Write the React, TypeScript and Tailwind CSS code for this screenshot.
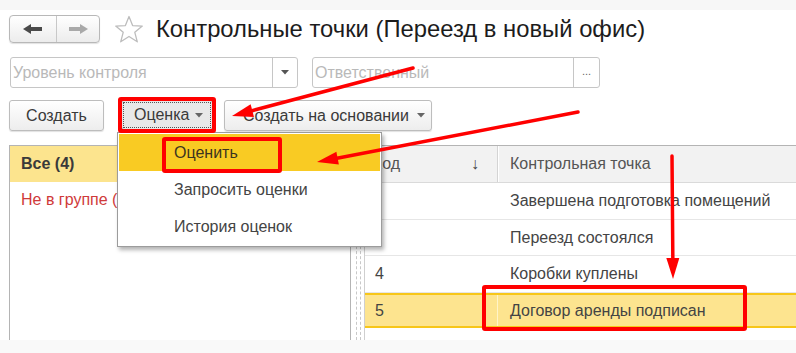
import React from "react";

function arrowParts(x1: number, y1: number, x2: number, y2: number, L = 21, W = 6.5) {
  const dx = x2 - x1;
  const dy = y2 - y1;
  const len = Math.hypot(dx, dy);
  const ux = dx / len;
  const uy = dy / len;
  const bx = x2 - ux * L;
  const by = y2 - uy * L;
  const px = -uy;
  const py = ux;
  const pts = `${x2},${y2} ${bx + px * W},${by + py * W} ${bx - px * W},${by - py * W}`;
  return { line: { x1, y1, x2: bx + ux * 2, y2: by + uy * 2 }, pts };
}

function Arrow({ x1, y1, x2, y2 }: { x1: number; y1: number; x2: number; y2: number }) {
  const a = arrowParts(x1, y1, x2, y2);
  return (
    <g>
      <line {...a.line} stroke="#ff0000" strokeWidth={3.5} strokeLinecap="round" />
      <polygon points={a.pts} fill="#ff0000" />
    </g>
  );
}

function Caret({ color = "#555" }: { color?: string }) {
  return (
    <svg width="8" height="5" viewBox="0 0 8 5" className="shrink-0">
      <path d="M0 0 L8 0 L4 4.5 Z" fill={color} />
    </svg>
  );
}

const btn =
  "h-[31px] flex items-center rounded-[3px] border border-[#bdbdbd] bg-gradient-to-b from-white to-[#ededed] shadow-[0_1px_1px_rgba(0,0,0,0.12)] text-[16px] text-[#3a3a3a]";

export default function App() {
  return (
    <div className="relative w-[796px] h-[353px] overflow-hidden bg-white flex flex-col font-['Liberation_Sans',Arial,sans-serif]">
      <div className="h-[10px] bg-[#f7f7f7] shrink-0" />

      {/* Row 1 */}
      <div className="mt-[5px] h-[28px] flex items-center shrink-0">
        <div className="ml-[9px] w-[91px] h-[28px] flex rounded-[4px] border border-[#b8b8b8] bg-gradient-to-b from-white to-[#ececec] shadow-[0_1px_1px_rgba(0,0,0,0.12)]">
          <div className="w-[47px] h-full flex items-center justify-center border-r border-[#c8c8c8]">
            <svg width="20" height="10" viewBox="0 0 20 10">
              <path d="M0 5 L8 0 L8 10 Z" fill="#4a4a4a" />
              <rect x="7" y="3" width="12" height="4" fill="#4a4a4a" />
            </svg>
          </div>
          <div className="flex-1 h-full flex items-center justify-center">
            <svg width="20" height="10" viewBox="0 0 20 10">
              <path d="M20 5 L12 0 L12 10 Z" fill="#a9a9a9" />
              <rect x="1" y="3" width="12" height="4" fill="#a9a9a9" />
            </svg>
          </div>
        </div>
        <svg width="30" height="28" viewBox="0 0 30 28" className="ml-[14px]">
          <path
            d="M15 1.5 L18.6 10.6 L28.3 11.1 L20.8 17.3 L23.3 26.8 L15 21.5 L6.7 26.8 L9.2 17.3 L1.7 11.1 L11.4 10.6 Z"
            fill="none"
            stroke="#bdbdbd"
            strokeWidth="1.3"
            strokeLinejoin="round"
          />
        </svg>
        <div className="ml-[12px] text-[23.8px] leading-[28px] text-[#1c1c1c] whitespace-nowrap">
          Контрольные точки (Переезд в новый офис)
        </div>
      </div>

      {/* Row 2 */}
      <div className="mt-[14px] h-[31px] flex shrink-0">
        <div className="ml-[10px] w-[288px] h-full flex rounded-[3px] border border-[#c6c6c6] bg-white">
          <div className="flex-1 flex items-center pl-[2px] text-[16px] text-[#b9b9b9] whitespace-nowrap">
            Уровень контроля
          </div>
          <div className="w-[25px] border-l border-[#c6c6c6] flex items-center justify-center">
            <Caret color="#555" />
          </div>
        </div>
        <div className="ml-[14px] w-[288px] h-full flex rounded-[3px] border border-[#c6c6c6] bg-white">
          <div className="flex-1 flex items-center pl-[2px] text-[16px] text-[#b9b9b9] whitespace-nowrap">
            Ответственный
          </div>
          <div className="w-[26px] border-l border-[#c6c6c6] flex items-center justify-center text-[11px] text-[#666] pb-[2px]">
            ...
          </div>
        </div>
      </div>

      {/* Row 3 */}
      <div className="mt-[12px] h-[31px] flex shrink-0">
        <div className={`${btn} ml-[9px] w-[95px] justify-center`}>Создать</div>
        <div className="ml-[17px] w-[92px] h-[30px] rounded-[3px] border border-[#b0b0b0] bg-[#e8e8e8] p-[1px]">
          <div className="w-full h-full border border-dotted border-[#555] flex items-center pl-[10px] gap-[6px] text-[16px] text-[#3a3a3a]">
            Оценка
            <Caret color="#666" />
          </div>
        </div>
        <div className={`${btn} ml-[11px] w-[208px] pl-[18px] gap-[8px]`}>
          Создать на основании
          <Caret color="#666" />
        </div>
      </div>

      {/* Main area */}
      <div className="mt-[14px] flex-1 flex min-h-0">
        {/* Left panel */}
        <div className="ml-[9px] w-[342px] border-l border-t border-r border-[#b4b4b4] flex flex-col">
          <div className="h-[36px] bg-[#fce48e] flex items-center pl-[11px] text-[16px] font-bold text-[#3a3a3a]">
            Все (4)
          </div>
          <div className="h-[36px] flex items-center pl-[11px] text-[16px] text-[#cf3a3a] whitespace-nowrap">
            Не в группе (0)
          </div>
        </div>
        {/* Splitter */}
        <div className="w-[13px] flex pl-[5px] gap-[3px]">
          <div className="w-0 border-l border-dashed border-[#c8c8c8]" />
          <div className="w-0 border-l border-dashed border-[#c8c8c8]" />
        </div>
        {/* Table */}
        <div className="flex-1 border-l border-t border-[#b4b4b4] border-l-[#cfcfcf] flex flex-col">
          <div className="h-[37px] bg-[#f2f2f2] flex border-b border-[#dadada] text-[16px] text-[#555]">
            <div className="w-[133px] flex items-center pl-[8px] pr-[18px] justify-between border-r border-[#d4d4d4] shadow-[1px_0_0_#ffffff]">
              <span>Код</span>
              <span className="text-[16px] text-[#444]">↓</span>
            </div>
            <div className="flex-1 flex items-center pl-[12px] whitespace-nowrap">Контрольная точка</div>
          </div>
          <div className="h-[37px] flex border-b border-[#e6e6e6] text-[16px] text-[#444]">
            <div className="w-[133px]" />
            <div className="flex-1 flex items-center pl-[12px] whitespace-nowrap">Завершена подготовка помещений</div>
          </div>
          <div className="h-[36px] flex border-b border-[#e6e6e6] text-[16px] text-[#444]">
            <div className="w-[133px]" />
            <div className="flex-1 flex items-center pl-[12px] whitespace-nowrap">Переезд состоялся</div>
          </div>
          <div className="h-[37px] flex border-b border-[#e6e6e6] text-[16px] text-[#444]">
            <div className="w-[133px] flex items-center pl-[10px]">4</div>
            <div className="flex-1 flex items-center pl-[12px] whitespace-nowrap">Коробки куплены</div>
          </div>
          <div className="h-[35px] flex border-y-2 border-[#f7c619] bg-[#fde48f] text-[16px] text-[#444]">
            <div className="w-[133px] flex items-center pl-[10px] border-r border-[#fff4c8]">5</div>
            <div className="flex-1 flex items-center pl-[12px] whitespace-nowrap">Договор аренды подписан</div>
          </div>
        </div>
      </div>

      <div className="h-[13px] bg-[#f9f9f9] shrink-0" />

      {/* Dropdown menu */}
      <div className="absolute left-[117px] top-[132px] w-[265px] h-[115px] bg-white border border-[#9c9c9c] shadow-[2px_3px_4px_rgba(0,0,0,0.3)] p-[1px] flex flex-col text-[16px]">
        <div className="h-[37px] bg-[#f9cb23] flex items-center pl-[55px] text-[#3d3520]">Оценить</div>
        <div className="h-[37px] flex items-center pl-[55px] text-[#444]">Запросить оценки</div>
        <div className="h-[37px] flex items-center pl-[55px] text-[#444]">История оценок</div>
      </div>

      {/* Red annotation boxes */}
      <div className="absolute left-[118px] top-[97px] w-[98px] h-[36px] border-[4px] border-[#ff0000] rounded-[3px]" />
      <div className="absolute left-[162px] top-[137px] w-[120px] h-[36px] border-[4px] border-[#ff0000] rounded-[3px]" />
      <div className="absolute left-[482px] top-[285px] w-[265px] h-[46px] border-[4px] border-[#ff0000] rounded-[3px]" />

      {/* Red arrows */}
      <svg className="absolute inset-0 pointer-events-none" width="796" height="353" viewBox="0 0 796 353">
        <Arrow x1={413} y1={68} x2={232} y2={116} />
        <Arrow x1={578} y1={112} x2={317} y2={162} />
        <Arrow x1={672} y1={156} x2={673} y2={279} />
      </svg>
    </div>
  );
}
